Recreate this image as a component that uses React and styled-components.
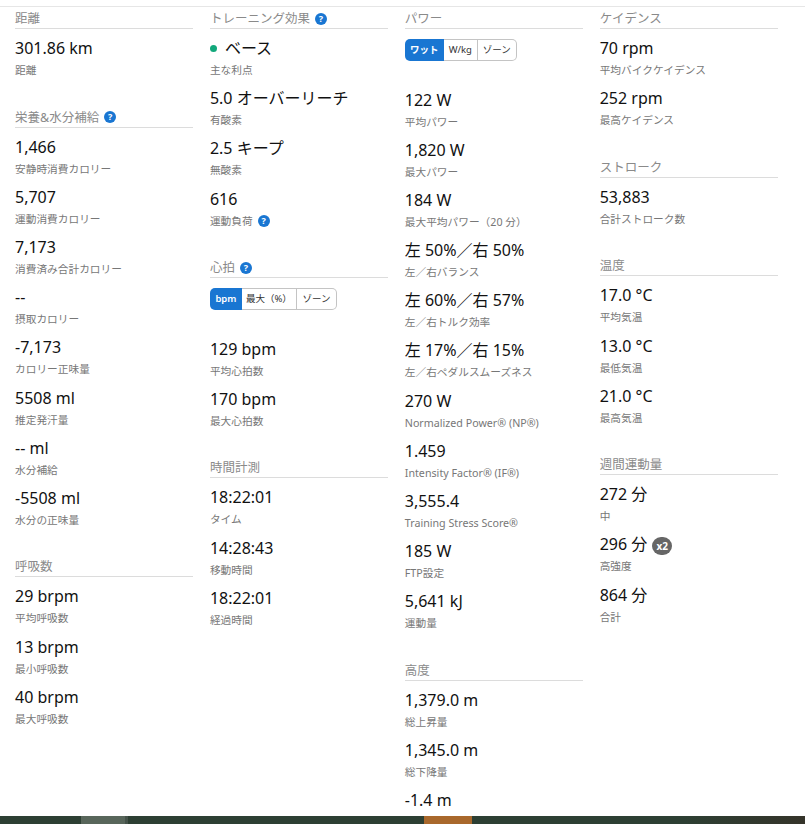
import React from 'react'
import styled, { createGlobalStyle } from 'styled-components';

const GlobalStyle = createGlobalStyle`
  html, body {
    margin: 0;
    padding: 0;
    height: 100%;
    overflow: hidden;
    background: #fff;
    font-family: "Noto Sans", "Noto Sans CJK JP", sans-serif;
  }
`

const columns = [
  [
    { title: '距離', stats: [{ value: '301.86 km', label: '距離' }] },
    {
      title: '栄養&水分補給', help: true, stats: [
        { value: '1,466', label: '安静時消費カロリー' },
        { value: '5,707', label: '運動消費カロリー' },
        { value: '7,173', label: '消費済み合計カロリー' },
        { value: '--', label: '摂取カロリー' },
        { value: '-7,173', label: 'カロリー正味量' },
        { value: '5508 ml', label: '推定発汗量' },
        { value: '-- ml', label: '水分補給' },
        { value: '-5508 ml', label: '水分の正味量' },
      ]
    },
    {
      title: '呼吸数', stats: [
        { value: '29 brpm', label: '平均呼吸数' },
        { value: '13 brpm', label: '最小呼吸数' },
        { value: '40 brpm', label: '最大呼吸数' },
      ]
    },
  ],
  [
    {
      title: 'トレーニング効果', help: true, stats: [
        { value: 'ベース', label: '主な利点', dot: true },
        { value: '5.0 オーバーリーチ', label: '有酸素' },
        { value: '2.5 キープ', label: '無酸素' },
        { value: '616', label: '運動負荷', labelHelp: true },
      ]
    },
    {
      title: '心拍', help: true, tabs: [['bpm', 32], ['最大（%）', 55], ['ゾーン', 40]], stats: [
        { value: '129 bpm', label: '平均心拍数' },
        { value: '170 bpm', label: '最大心拍数' },
      ]
    },
    {
      title: '時間計測', stats: [
        { value: '18:22:01', label: 'タイム' },
        { value: '14:28:43', label: '移動時間' },
        { value: '18:22:01', label: '経過時間' },
      ]
    },
  ],
  [
    {
      title: 'パワー', tabs: [['ワット', 39], ['W/kg', 34], ['ゾーン', 39]], stats: [
        { value: '122 W', label: '平均パワー' },
        { value: '1,820 W', label: '最大パワー' },
        { value: '184 W', label: '最大平均パワー（20 分）' },
        { value: '左 50%／右 50%', label: '左／右バランス' },
        { value: '左 60%／右 57%', label: '左／右トルク効率' },
        { value: '左 17%／右 15%', label: '左／右ペダルスムーズネス' },
        { value: '270 W', label: 'Normalized Power® (NP®)' },
        { value: '1.459', label: 'Intensity Factor® (IF®)' },
        { value: '3,555.4', label: 'Training Stress Score®' },
        { value: '185 W', label: 'FTP設定' },
        { value: '5,641 kJ', label: '運動量' },
      ]
    },
    {
      title: '高度', stats: [
        { value: '1,379.0 m', label: '総上昇量' },
        { value: '1,345.0 m', label: '総下降量' },
        { value: '-1.4 m' },
      ]
    },
  ],
  [
    {
      title: 'ケイデンス', stats: [
        { value: '70 rpm', label: '平均バイクケイデンス' },
        { value: '252 rpm', label: '最高ケイデンス' },
      ]
    },
    { title: 'ストローク', stats: [{ value: '53,883', label: '合計ストローク数' }] },
    {
      title: '温度', stats: [
        { value: '17.0 °C', label: '平均気温' },
        { value: '13.0 °C', label: '最低気温' },
        { value: '21.0 °C', label: '最高気温' },
      ]
    },
    {
      title: '週間運動量', stats: [
        { value: '272 分', label: '中' },
        { value: '296 分', label: '高強度', badge: 'x2' },
        { value: '864 分', label: '合計' },
      ]
    },
  ],
]

const App = () => {
  return (
    <Page>
      <GlobalStyle />
      <Content>
        {columns.map((sections, i) => (
          <Column key={i}>
            {sections.map((section) => (
              <Section key={section.title}>
                <Heading>
                  {section.title}
                  {section.help && <Help>?</Help>}
                </Heading>
                {section.tabs && (
                  <Tabs>
                    {section.tabs.map(([name, width], t) => (
                      <Tab key={name} $active={t === 0} $width={width}>{name}</Tab>
                    ))}
                  </Tabs>
                )}
                {section.stats.map((stat) => (
                  <Stat key={stat.value + stat.label}>
                    <Value>
                      {stat.dot && <Dot />}
                      {stat.value}
                      {stat.badge && <Badge>{stat.badge}</Badge>}
                    </Value>
                    {stat.label && (
                      <Label>
                        {stat.label}
                        {stat.labelHelp && <Help>?</Help>}
                      </Label>
                    )}
                  </Stat>
                ))}
              </Section>
            ))}
          </Column>
        ))}
      </Content>
      <TaskBar>
        <BarPiece $width={81} />
        <BarPiece $width={44} $color="#58665b" />
        <BarPiece $width={3} $color="#45534a" />
        <BarPiece $width={296} />
        <BarPiece $width={48} $color="#a9682c" />
        <BarPiece $grow />
      </TaskBar>
    </Page>
  )
}

export default App;

const Page = styled.div`
  height: 824px;
  display: flex;
  flex-direction: column;
  overflow: hidden;
`

const Content = styled.div`
  flex: 1;
  min-height: 0;
  overflow: hidden;
  border-top: 1px solid #e6e6e6;
  margin-top: 6px;
  padding: 0 27px 0 15px;
  display: grid;
  grid-template-columns: repeat(4, 178.4px);
  column-gap: 16.5px;
  align-items: start;
`

const Column = styled.div`
  display: flex;
  flex-direction: column;
  padding-top: 2px;
`

const Section = styled.section`
  margin-bottom: 21.4px;
`

const Heading = styled.h3`
  margin: 0 0 7px;
  height: 20px;
  line-height: 19px;
  font-size: 12.5px;
  font-weight: 400;
  color: #8a8a8a;
  border-bottom: 1px solid #dcdcdc;
  box-sizing: border-box;
  display: flex;
  align-items: center;
`

const Help = styled.span`
  width: 12px;
  height: 12px;
  margin-left: 5px;
  border-radius: 50%;
  background: #1976d2;
  color: #fff;
  font-size: 9px;
  font-weight: 700;
  line-height: 12px;
  text-align: center;
  display: inline-block;
  flex: none;
`

const Tabs = styled.div`
  display: flex;
  width: fit-content;
  height: 22px;
  margin: 10px 0 26.5px;
`

const Tab = styled.div`
  box-sizing: border-box;
  width: ${(p) => p.$width}px;
  font-size: 9.5px;
  line-height: ${(p) => (p.$active ? '22px' : '20px')};
  text-align: center;
  white-space: nowrap;
  color: ${(p) => (p.$active ? '#fff' : '#333')};
  background: ${(p) => (p.$active ? '#1976d2' : '#fff')};
  font-weight: ${(p) => (p.$active ? 600 : 400)};
  border: ${(p) => (p.$active ? 'none' : '1px solid #c4c4c4')};
  border-left-width: 0;

  &:first-child {
    border-radius: 5px 0 0 5px;
  }

  &:last-child {
    border-radius: 0 5px 5px 0;
  }
`

const Stat = styled.div`
  height: 50.2px;
`

const Value = styled.div`
  height: 24px;
  line-height: 24px;
  font-size: 16px;
  color: #111;
  white-space: nowrap;
  display: flex;
  align-items: center;
`

const Dot = styled.span`
  width: 7px;
  height: 7px;
  margin-right: 8px;
  border-radius: 50%;
  background: #12a87b;
  flex: none;
`

const Badge = styled.span`
  width: 20px;
  height: 18px;
  margin: 3px 0 0 5px;
  border-radius: 9px;
  background: #666;
  color: #fff;
  font-size: 10px;
  font-weight: 700;
  line-height: 18px;
  text-align: center;
  flex: none;
`

const Label = styled.div`
  margin-top: 2px;
  height: 16px;
  line-height: 16px;
  font-size: 10.7px;
  color: #777;
  white-space: nowrap;
  display: flex;
  align-items: center;
`

const TaskBar = styled.div`
  height: 8px;
  flex: none;
  display: flex;
  background: linear-gradient(90deg, #2d3f33 0%, #2d3f33 85%, #35342a 100%);
`

const BarPiece = styled.div`
  width: ${(p) => (p.$width ? `${p.$width}px` : 'auto')};
  flex: ${(p) => (p.$grow ? 1 : 'none')};
  background: ${(p) => p.$color || 'transparent'};
`
